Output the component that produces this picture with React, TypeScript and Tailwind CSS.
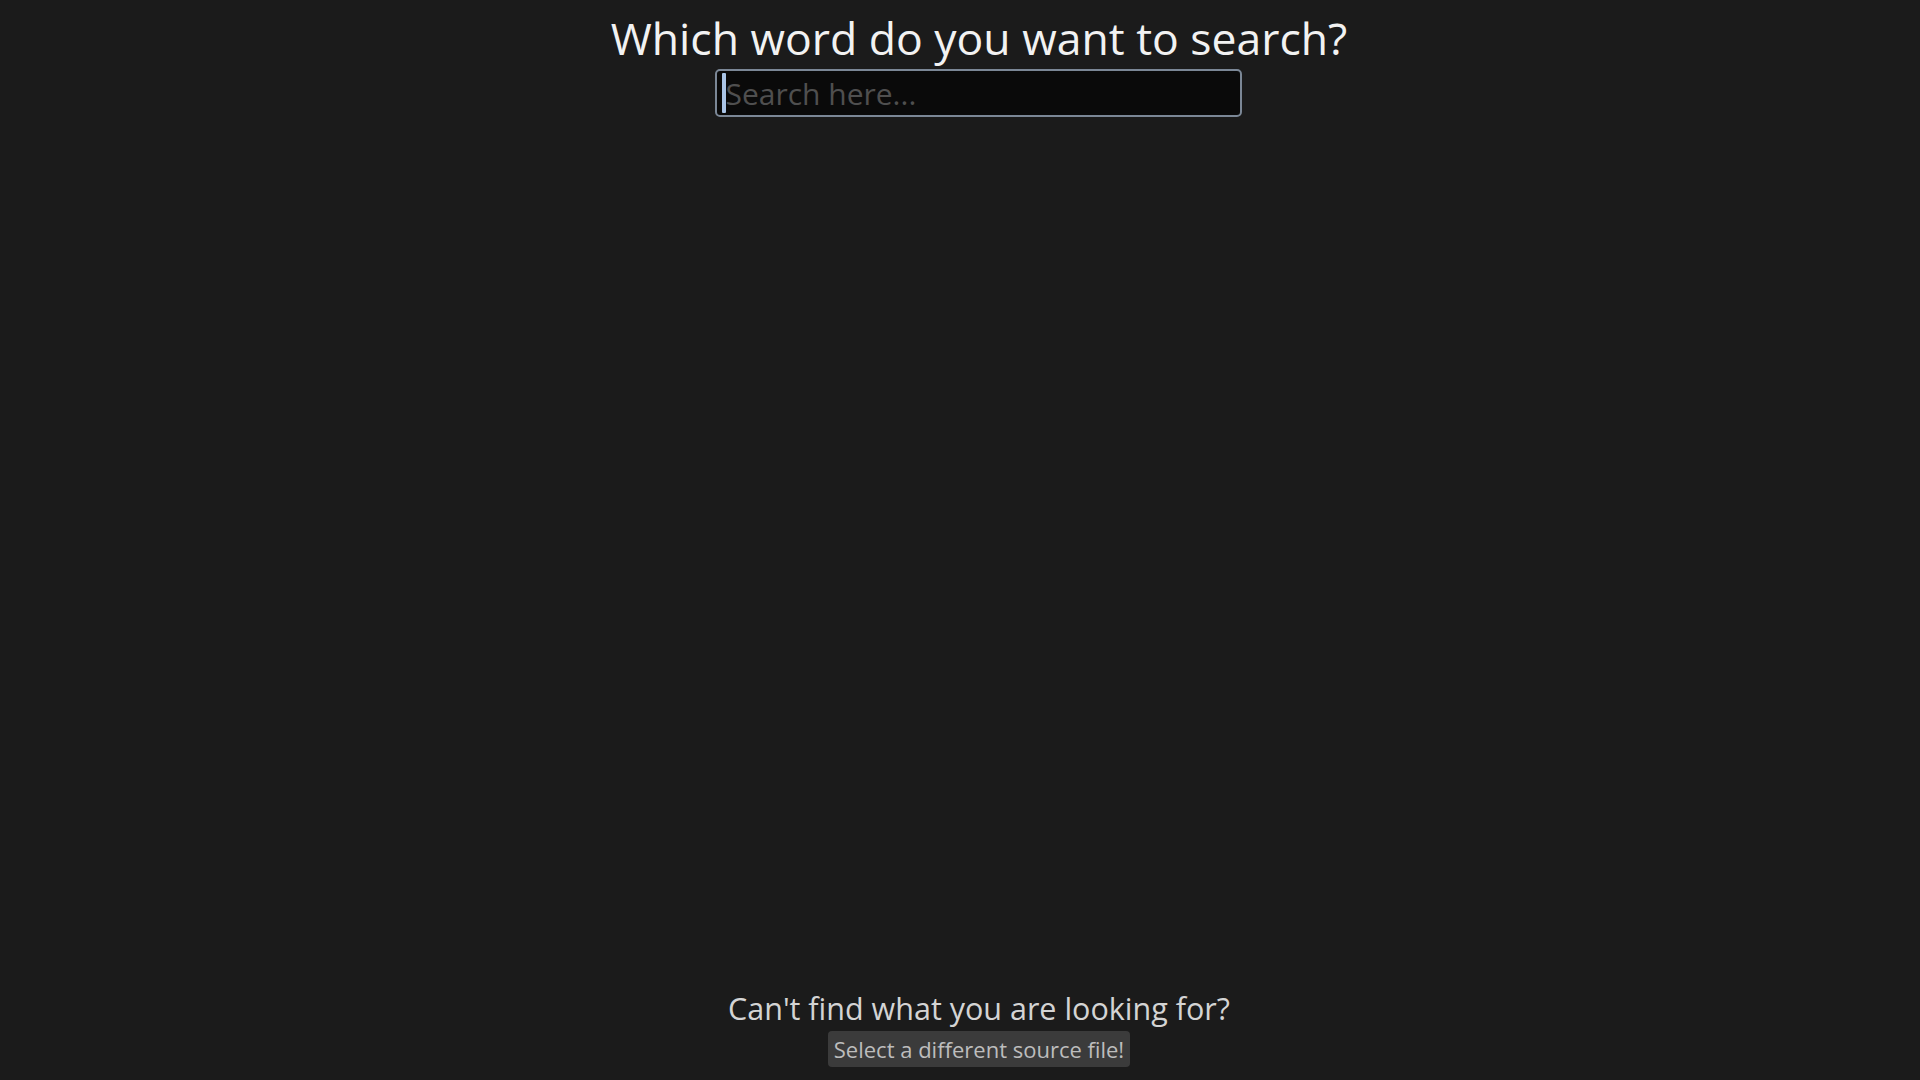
import React, { useState } from 'react';

const App: React.FC = () => {
  const [query, setQuery] = useState('');
  const empty = query.length === 0;

  return (
    <div
      className="min-h-screen h-screen bg-[#1b1b1b] flex flex-col items-center justify-between overflow-hidden pl-[38px]"
      style={{ fontFamily: '"Open Sans", "Noto Sans", sans-serif' }}
    >
      {/* Search */}
      <div className="flex flex-col items-center pt-[10px]">
        <h1 className="text-[44.5px] leading-[56px] text-[#f2f2f2]">
          Which word do you want to search?
        </h1>
        <div className="relative mt-[3px]">
          <input
            autoFocus
            value={query}
            onChange={(e) => setQuery(e.target.value)}
            placeholder="Search here..."
            className={
              'w-[527px] h-[48px] px-[8px] bg-[#0a0a0a] border-2 border-[#7b8796] rounded-[5px] text-[30px] text-[#e0e0e0] placeholder:text-[#4f4f4f] outline-none ' +
              (empty ? 'caret-transparent' : 'caret-[#a9c4e6]')
            }
          />
          {empty && (
            <span className="pointer-events-none absolute left-[7px] top-[4px] w-[4px] h-[40px] bg-[#a9c4e6] rounded-[1px]" />
          )}
        </div>
      </div>

      {/* Footer */}
      <div className="flex flex-col items-center pb-[13px]">
        <p className="text-[30.5px] leading-[38px] text-[#d4d4d4]">
          Can't find what you are looking for?
        </p>
        <button className="mt-[4px] px-[6px] h-[36px] bg-[#3b3b3b] rounded-[4px] text-[22px] text-[#bdbdbd]">
          Select a different source file!
        </button>
      </div>
    </div>
  );
};

export default App;
